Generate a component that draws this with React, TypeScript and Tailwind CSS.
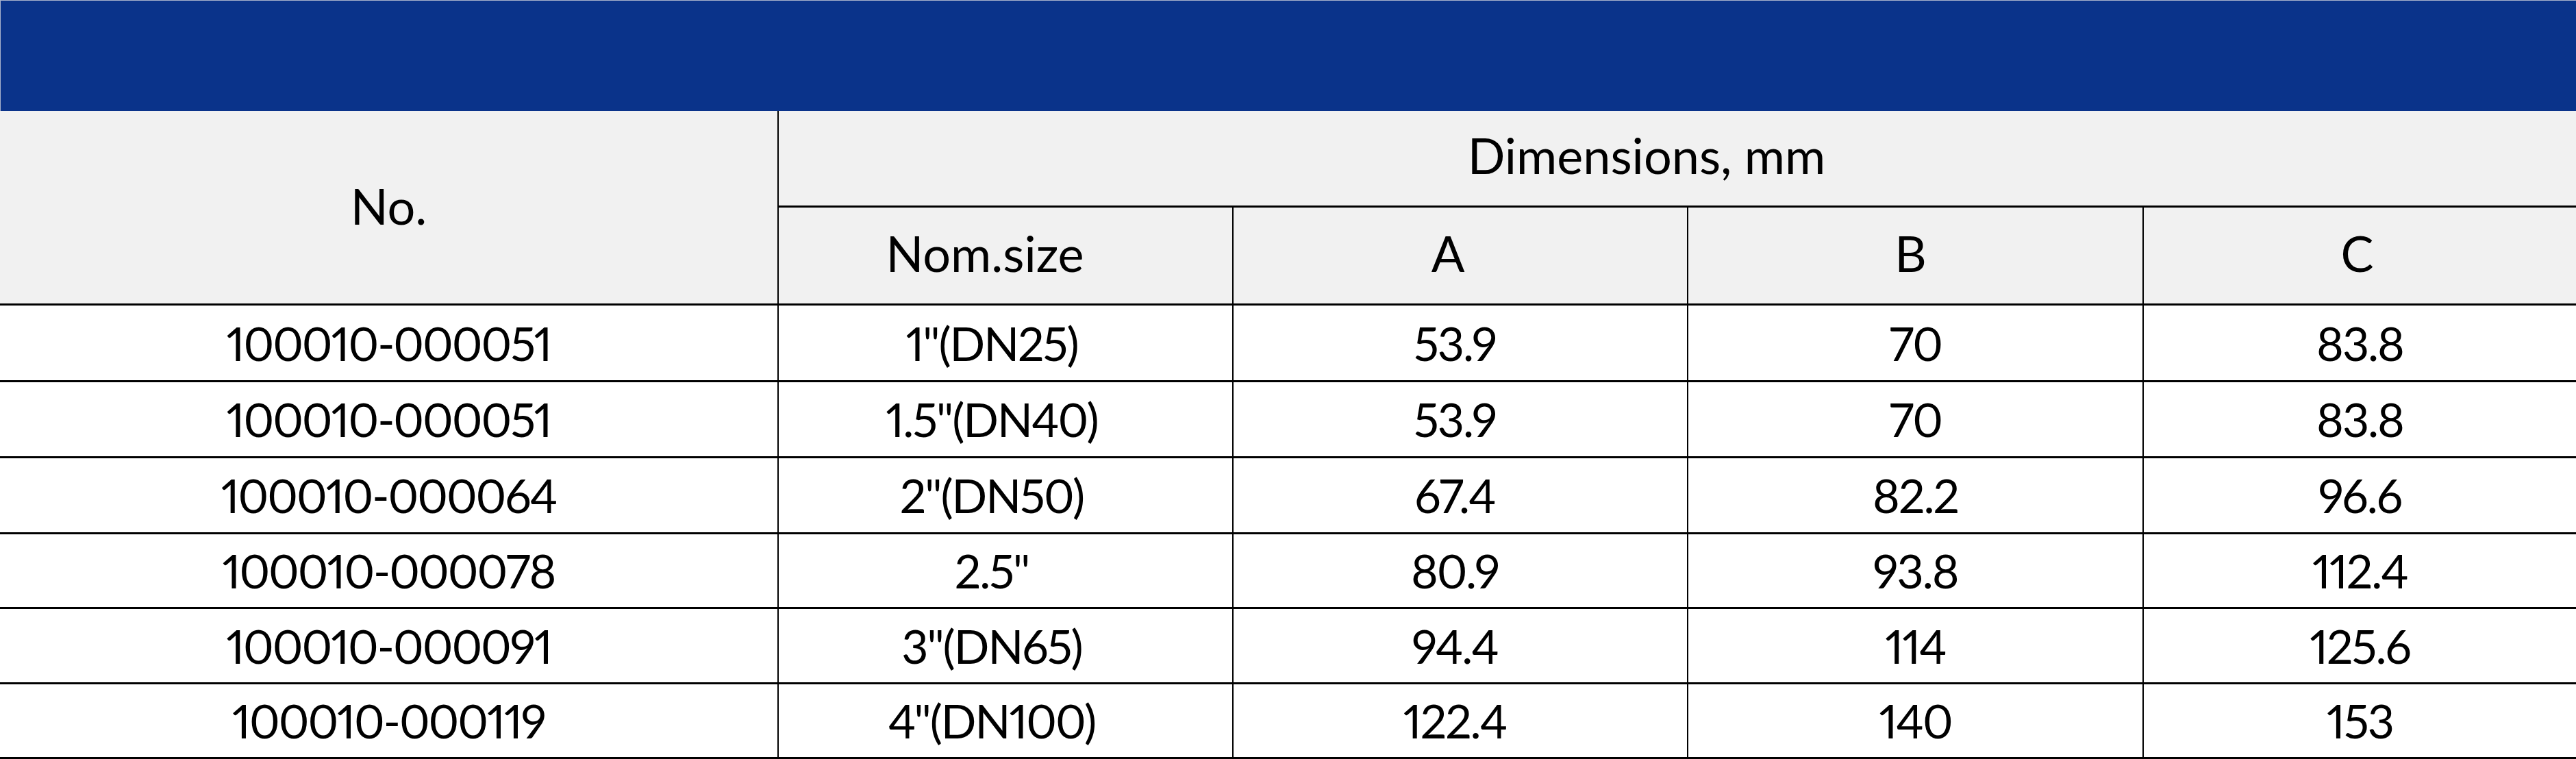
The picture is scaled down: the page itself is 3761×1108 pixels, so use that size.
const rows = [
  ["100010-000051", '1"(DN25)', "53.9", "70", "83.8"],
  ["100010-000051", '1.5"(DN40)', "53.9", "70", "83.8"],
  ["100010-000064", '2"(DN50)', "67.4", "82.2", "96.6"],
  ["100010-000078", '2.5"', "80.9", "93.8", "112.4"],
  ["100010-000091", '3"(DN65)', "94.4", "114", "125.6"],
  ["100010-000119", '4"(DN100)', "122.4", "140", "153"],
];

// small per-column nudges so the text sits where the original has it
const headShift = ["pr-[60px]", "pr-[36px]", "pr-[14px]", "pr-[8px]"];
const cellShift = ["", "pr-[40px]", "pr-[16px]", "", ""];

export default function App() {
  return (
    <div className="w-full bg-white text-black font-['Lato','Open_Sans',sans-serif]">
      {/* title bar */}
      <div className="h-[162px] bg-[#0a338a] border-t border-l border-[#aab4cc]" />

      <div className="grid grid-cols-[1137px_664px_664px_665px_1fr] grid-rows-[141px_143px_112px_111px_111px_109px_110px_109px]">
        <div className="row-span-2 flex items-center justify-center pb-[6px] bg-[#f1f1f1] border-r-2 border-b-[3px] border-black text-[72px] leading-none">
          No.
        </div>
        <div className="col-span-4 flex items-center justify-center pb-[10px] pr-[90px] bg-[#f1f1f1] border-b-[3px] border-black text-[72px] leading-none">
          Dimensions, mm
        </div>

        {["Nom.size", "A", "B", "C"].map((h, i) => (
          <div
            key={h}
            className={
              "flex items-center justify-center pb-[8px] bg-[#f1f1f1] border-b-[3px] border-black text-[72px] leading-none " +
              headShift[i] +
              (i < 3 ? " border-r-2" : "")
            }
          >
            {h}
          </div>
        ))}

        {rows.map((r, ri) =>
          r.map((v, ci) => (
            <div
              key={ri + "-" + ci}
              className={
                "flex items-center justify-center border-b-[3px] border-black text-[68px] leading-none tracking-[-0.03em] proportional-nums " +
                cellShift[ci] +
                (ci < 4 ? " border-r-2" : "")
              }
            >
              {v}
            </div>
          ))
        )}
      </div>
    </div>
  );
}
